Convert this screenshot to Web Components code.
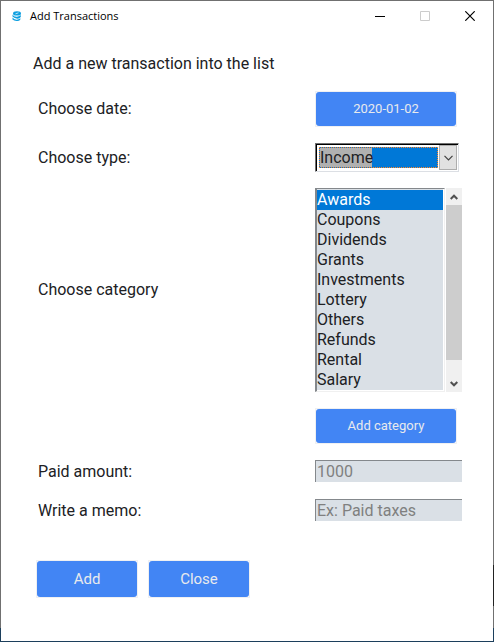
<!DOCTYPE html>
<html lang="en">
<head>
<meta charset="utf-8">
<title>Add Transactions</title>
<style>
html, body { height: 100%; margin: 0; }
body { font: 16px/20px Roboto, "Liberation Sans", sans-serif; color: #202124; }
</style>
</head>
<body>
<app-window heading="Add Transactions">
  <transaction-form></transaction-form>
</app-window>

<script>
const define = (name, html, setup) => {
  const tpl = document.createElement('template');
  tpl.innerHTML = html;
  customElements.define(name, class extends HTMLElement {
    constructor() {
      super();
      this.attachShadow({ mode: 'open' }).append(tpl.content.cloneNode(true));
    }
    connectedCallback() { if (setup) setup(this, this.shadowRoot); }
  });
};

define('push-button', `
<style>
:host { display: block; box-sizing: border-box; border: 1px solid #eff0f2; }
button { display: block; width: 100%; height: 100%; margin: 0; padding: 0; border: 0; border-radius: 3px;
  background: #4285f4; color: #e8eaed; font: inherit; }
</style>
<button type="button"><slot></slot></button>`);

define('text-field', `
<style>
:host { display: contents; }
label { padding-top: 2px; }
input { box-sizing: border-box; width: 100%; height: 22px; margin: 0; padding: 0 1px; border: 1px solid #84888c;
  border-right: 0; border-bottom: 0; border-radius: 0; background: #dae0e6; font: inherit; color: #202124; outline: 0; }
input::placeholder { color: #808080; opacity: 1; }
</style>
<label for="field"></label><input id="field" type="text">`, (host, root) => {
  root.querySelector('label').textContent = host.getAttribute('label');
  root.querySelector('input').placeholder = host.getAttribute('placeholder');
});

define('type-picker', `
<style>
:host { display: contents; }
label { align-self: center; }
.box { box-sizing: border-box; display: grid; grid-template-columns: 1fr 18px; gap: 1px; width: 144px; height: 29px;
  padding: 1px; border: 1px solid #dcdfe4; border-top-color: #707070; border-left-color: #707070;
  box-shadow: inset 1px 1px #000; background: #fff; }
select { appearance: none; box-sizing: border-box; min-width: 0; height: 21px; margin: 2px 0 0 2px; padding: 0; border: 1px dotted #ff8728;
  border-radius: 0; outline: 0; font: inherit; line-height: 19px; color: #202124;
  background: linear-gradient(#b0b0b0, #b0b0b0) 0 0 / 52px 100% no-repeat #0078d7; }
.arrow { box-sizing: border-box; display: grid; place-items: center; border: 1px solid #adadad; background: #e1e1e1; }
svg { fill: none; stroke: #404040; stroke-width: 1.2; }
</style>
<label for="type">Choose type:</label>
<div class="box">
  <select id="type"><option>Income</option><option>Expense</option></select>
  <span class="arrow"><svg width="9" height="6" viewBox="0 0 9 6"><path d="M.5 .8 4.5 4.8 8.5 .8"/></svg></span>
</div>`);

define('category-list', `
<style>
:host { display: contents; }
label { align-self: center; }
.box { display: grid; grid-template-columns: 1fr 16px; gap: 1px; height: 204px; }
select { box-sizing: border-box; width: 100%; height: 100%; margin: 0; padding: 1px 0 0; overflow: hidden; scrollbar-width: none;
  border: 1px solid #f0f0f0; border-top-color: #84888c; border-left: 2px solid #84888c; border-radius: 0; outline: 0;
  background: #dae0e6; color: #202124; font: inherit; box-shadow: inset -1px -1px #fff; }
option { min-height: 20px; padding: 0; margin-right: 1px; font: inherit; line-height: 20px; }
option:checked { background: linear-gradient(#0078d7, #0078d7); color: #fff; }
.bar { display: grid; grid-template-rows: 17px 155px 1fr; background: #f0f0f0; }
.bar svg { place-self: center; margin-top: 16px; }
.bar svg:first-child { margin-top: 0; }
.thumb { background: #cdcdcd; }
svg { fill: none; stroke: #505050; stroke-width: 2; }
</style>
<label for="list">Choose category</label>
<div class="box">
  <select id="list" size="10">
    <option selected>Awards</option><option>Coupons</option><option>Dividends</option><option>Grants</option><option>Investments</option>
    <option>Lottery</option><option>Others</option><option>Refunds</option><option>Rental</option><option>Salary</option>
  </select>
  <div class="bar">
    <svg width="8" height="6" viewBox="0 0 8 6"><path d="M.7 5 4 1.7 7.3 5"/></svg>
    <span class="thumb"></span>
    <svg width="8" height="6" viewBox="0 0 8 6"><path d="M.7 1 4 4.3 7.3 1"/></svg>
  </div>
</div>`);

define('transaction-form', `
<style>
:host { display: block; padding: 23px 31px 42px 32px; }
h1 { margin: 0; font: inherit; }
.fields { display: grid; grid-template-columns: 1fr 147px; grid-template-rows: repeat(4, auto) 23px 23px; row-gap: 16px; padding: 17px 0 0 5px; }
.fields > span { align-self: center; }
.fields push-button { grid-column: 2; width: 142px; height: 36px; font-size: 13px; }
.actions { display: flex; gap: 10px; margin: 38px 0 0 3px; }
.actions push-button { width: 102px; height: 38px; font-size: 15px; }
</style>
<h1>Add a new transaction into the list</h1>
<div class="fields">
  <span>Choose date:</span><push-button>2020-01-02</push-button>
  <type-picker></type-picker>
  <category-list></category-list>
  <push-button>Add category</push-button>
  <text-field label="Paid amount:" placeholder="1000"></text-field>
  <text-field label="Write a memo:" placeholder="Ex: Paid taxes"></text-field>
</div>
<div class="actions"><push-button>Add</push-button><push-button>Close</push-button></div>`);

define('app-window', `
<style>
:host { display: flex; flex-direction: column; box-sizing: border-box; min-height: 100%; padding: 1px;
  background: linear-gradient(#1c3f5c, #1c3f5c) 0 100% / 100% 14px no-repeat,
    linear-gradient(#222, #222) 100% 94% / 1px 41px no-repeat, #707070; }
header { display: flex; align-items: center; height: 30px; padding-right: 1px; background: #fff; color: #000;
  font: 11px/16px "Open Sans", "Noto Sans", sans-serif; }
.logo { margin: 0 7px 0 11px; }
b { flex: 1; font-weight: 400; }
button { display: grid; place-items: center; width: 45px; height: 30px; margin: 0; padding: 0; border: 0; background: none; color: #000; }
button:disabled { color: #ccc; }
button svg { fill: none; stroke: currentColor; }
main { flex: 1; background: #fff; }
</style>
<header>
  <svg class="logo" width="11" height="11" viewBox="0 0 11 11"><g fill="#0e9fe0"><ellipse cx="5" cy="2.4" rx="4" ry="2.2"/><path d="M.5 3.5Q2 6 5 5.7T8.800 4V6Q7 8.200 4.500 7.600T.5 5.500Z"/><path d="M.5 6.600Q2 9 5 8.700T8.300 7V8.800Q7 10.300 4.500 10T.5 8.500Z"/></g><path d="M3.500 2.800 6.500 1.800" stroke="#b5e5fa"/></svg>
  <b></b>
  <button type="button" aria-label="Minimize"><svg width="10" height="10"><path d="M0 5.500H10"/></svg></button>
  <button type="button" aria-label="Maximize" disabled><svg width="10" height="10"><path d="M.5.5H9.500V9.500H.5Z"/></svg></button>
  <button type="button" aria-label="Close window"><svg width="10" height="10"><path d="M.3.3 9.700 9.700M9.700.3.3 9.700" stroke-width="1.200"/></svg></button>
</header>
<main><slot></slot></main>`, (host, root) => {
  root.querySelector('b').textContent = host.getAttribute('heading');
});
</script>
</body>
</html>
